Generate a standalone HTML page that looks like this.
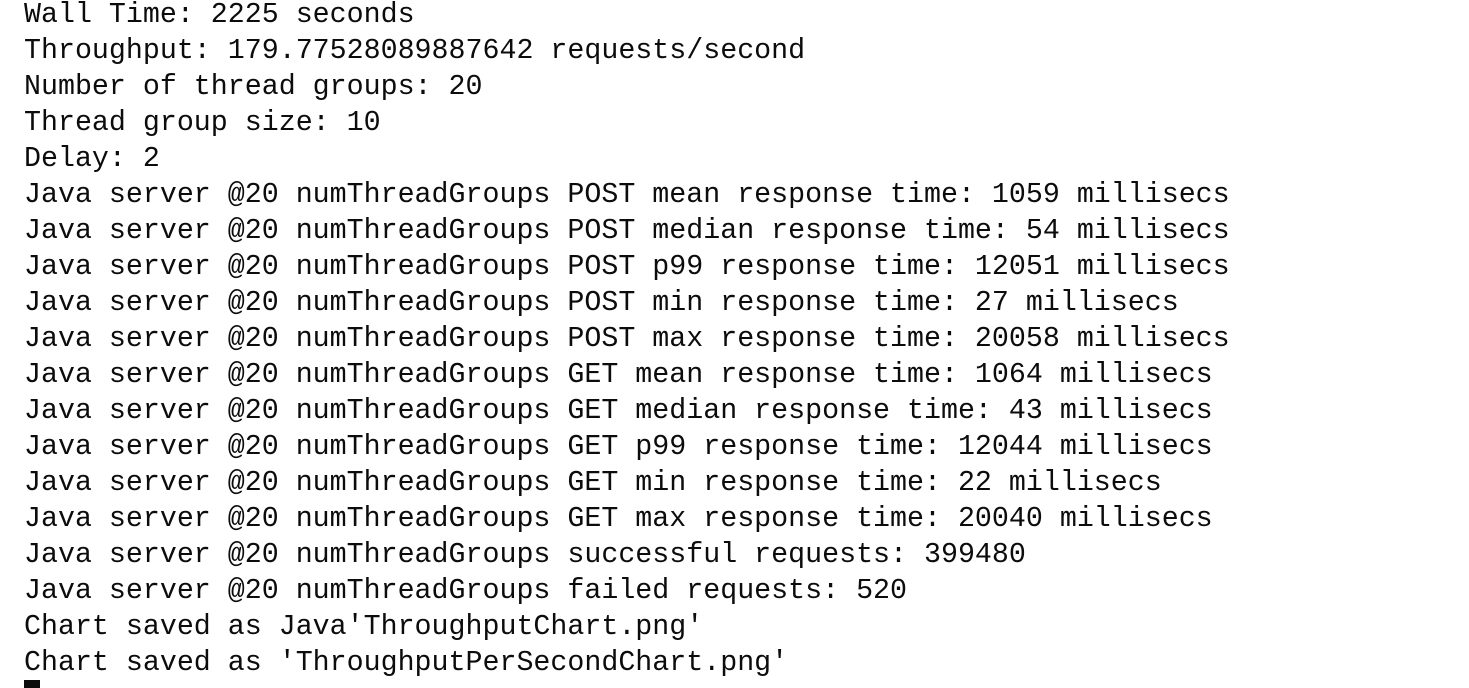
<!DOCTYPE html>
<html><head><meta charset="utf-8"><style>
html,body{margin:0;padding:0;background:#fff;width:1469px;height:688px;overflow:hidden}
pre{margin:0;position:absolute;left:24px;top:-3px;font-family:"Liberation Mono",monospace;font-size:28.3px;line-height:36px;color:#0c0c0c}
.cur{position:absolute;left:24px;top:680px;width:16px;height:8px;background:#0c0c0c}
</style></head><body>
<pre>Wall Time: 2225 seconds
Throughput: 179.77528089887642 requests/second
Number of thread groups: 20
Thread group size: 10
Delay: 2
Java server @20 numThreadGroups POST mean response time: 1059 millisecs
Java server @20 numThreadGroups POST median response time: 54 millisecs
Java server @20 numThreadGroups POST p99 response time: 12051 millisecs
Java server @20 numThreadGroups POST min response time: 27 millisecs
Java server @20 numThreadGroups POST max response time: 20058 millisecs
Java server @20 numThreadGroups GET mean response time: 1064 millisecs
Java server @20 numThreadGroups GET median response time: 43 millisecs
Java server @20 numThreadGroups GET p99 response time: 12044 millisecs
Java server @20 numThreadGroups GET min response time: 22 millisecs
Java server @20 numThreadGroups GET max response time: 20040 millisecs
Java server @20 numThreadGroups successful requests: 399480
Java server @20 numThreadGroups failed requests: 520
Chart saved as Java'ThroughputChart.png'
Chart saved as 'ThroughputPerSecondChart.png'</pre>
<div class="cur"></div>
</body></html>
